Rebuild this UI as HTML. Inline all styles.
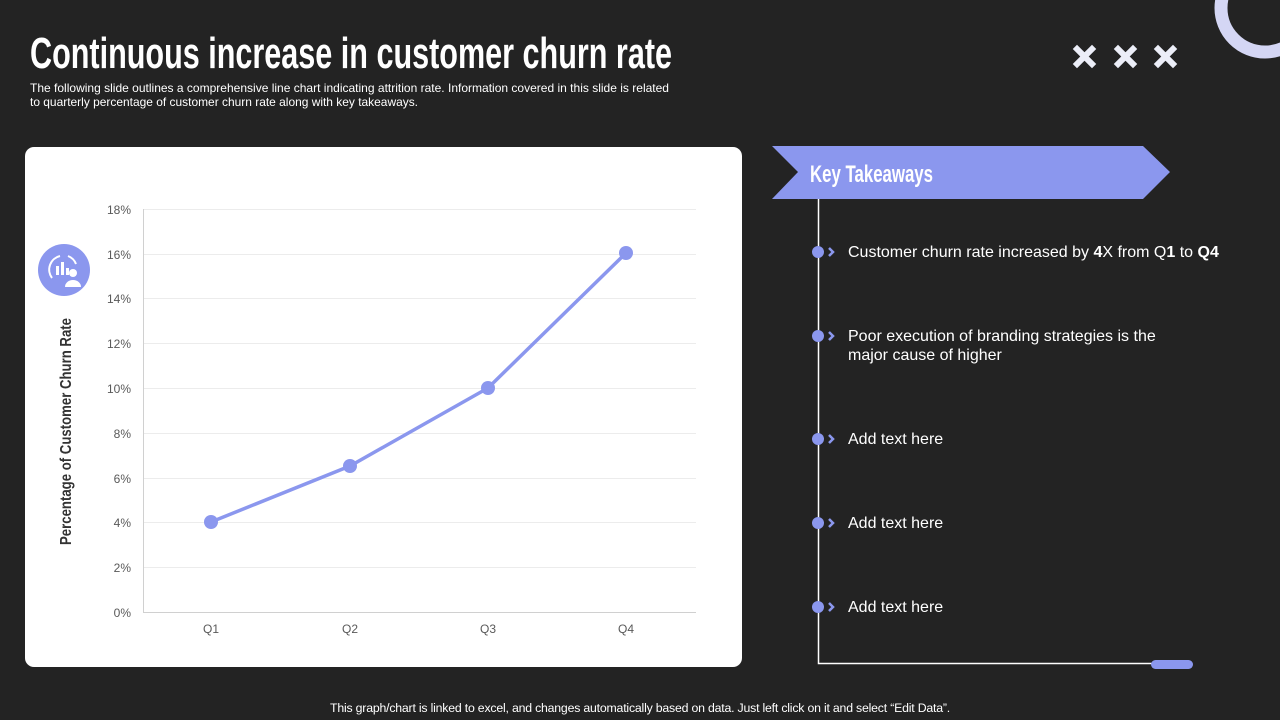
<!DOCTYPE html>
<html><head><meta charset="utf-8"><style>
body{margin:0;width:1280px;height:720px;background:#232323;position:relative;overflow:hidden;font-family:"Liberation Sans",sans-serif;color:#fff}
.a{position:absolute}
.card{left:25px;top:147px;width:717px;height:520px;background:#fff;border-radius:9px}
.it{left:848px;font-size:16px;line-height:19px;color:#fff;letter-spacing:0}
.foot{left:0;width:1280px;top:701px;text-align:center;font-size:12.3px;letter-spacing:-0.2px}
</style></head><body>
<svg class="a" style="left:0;top:0" width="1280" height="720">
<text x="30" y="68" font-family="Liberation Sans" font-weight="bold" font-size="44" fill="#fff" textLength="642" lengthAdjust="spacingAndGlyphs">Continuous increase in customer churn rate</text>
<text x="30" y="92" font-family="Liberation Sans" font-size="12" fill="#fff" textLength="639" lengthAdjust="spacingAndGlyphs">The following slide outlines a comprehensive line chart indicating attrition rate. Information covered in this slide is related</text>
<text x="30" y="106" font-family="Liberation Sans" font-size="12" fill="#fff" textLength="388" lengthAdjust="spacingAndGlyphs">to quarterly percentage of customer churn rate along with key takeaways.</text>
<circle cx="1265" cy="8" r="44" fill="none" stroke="#d4d6f4" stroke-width="13"/>
<g stroke="#eceef8" stroke-width="6" stroke-linecap="square">
<path d="M1077 49l15 15M1092 49l-15 15M1118 49l15 15M1133 49l-15 15M1158 49l15 15M1173 49l-15 15"/></g>
<polygon points="772,146 1143,146 1170,172 1143,199 772,199 798,172" fill="#8b97ee"/>
<text x="810" y="182" font-family="Liberation Sans" font-weight="bold" font-size="24" fill="#fff" textLength="123" lengthAdjust="spacingAndGlyphs">Key Takeaways</text>
<path d="M818.5 199V663.5H1155" stroke="#fff" stroke-width="1.5" fill="none"/>
<rect x="1151" y="660" width="42" height="9" rx="4.5" fill="#8b97ee"/>
<g fill="#8b97ee">
<circle cx="818" cy="252" r="6"/><circle cx="818" cy="336" r="6"/><circle cx="818" cy="439" r="6"/><circle cx="818" cy="523" r="6"/><circle cx="818" cy="607" r="6"/></g>
<g stroke="#8b97ee" stroke-width="2.5" fill="none">
<path d="M829 248l4 4-4 4M829 332l4 4-4 4M829 435l4 4-4 4M829 519l4 4-4 4M829 603l4 4-4 4"/></g>
</svg>
<div class="a it" style="top:243px">Customer churn rate increased by <b>4</b>X from Q<b>1</b> to <b>Q4</b></div>
<div class="a it" style="top:327px;width:330px">Poor execution of branding strategies is the major cause of higher</div>
<div class="a it" style="top:430px">Add text here</div>
<div class="a it" style="top:514px">Add text here</div>
<div class="a it" style="top:598px">Add text here</div>
<div class="a card"></div>
<svg class="a" style="left:0;top:0" width="760" height="700">
<g stroke="#ececec" stroke-width="1">
<path d="M143 209.5H696M143 254.5H696M143 298.5H696M143 343.5H696M143 388.5H696M143 433.5H696M143 478.5H696M143 522.5H696M143 567.5H696"/></g>
<path d="M143.5 209V612.5H696" stroke="#d0d0d0" fill="none"/>
<g font-family="Liberation Sans" font-size="12" fill="#595959" text-anchor="end">
<text x="131" y="214">18%</text><text x="131" y="259">16%</text><text x="131" y="303">14%</text><text x="131" y="348">12%</text><text x="131" y="393">10%</text><text x="131" y="438">8%</text><text x="131" y="483">6%</text><text x="131" y="527">4%</text><text x="131" y="572">2%</text><text x="131" y="617">0%</text></g>
<g font-family="Liberation Sans" font-size="12" fill="#595959" text-anchor="middle">
<text x="211" y="633">Q1</text><text x="350" y="633">Q2</text><text x="488" y="633">Q3</text><text x="626" y="633">Q4</text></g>
<polyline points="211,522 350,466 488,388 626,253" stroke="#8b97ee" stroke-width="3.5" fill="none"/>
<g fill="#8b97ee"><circle cx="211" cy="522" r="7"/><circle cx="350" cy="466" r="7"/><circle cx="488" cy="388" r="7"/><circle cx="626" cy="253" r="7"/></g>
<text transform="translate(71,545) rotate(-90)" font-family="Liberation Sans" font-weight="bold" font-size="16" fill="#333" textLength="227" lengthAdjust="spacingAndGlyphs">Percentage  of Customer  Churn  Rate</text>
<circle cx="64" cy="270" r="26" fill="#8b97ee"/>
<g stroke="#fff" stroke-width="2" fill="none"><path d="M52 278a14 14 0 0 1 8-22M68 256a14 14 0 0 1 8 8"/></g>
<g fill="#fff"><rect x="56" y="266" width="3" height="9"/><rect x="61" y="262" width="3" height="13"/><rect x="66" y="268" width="3" height="7"/>
<circle cx="73" cy="273" r="4"/><path d="M65 287a8 7 0 0 1 16 0z"/></g>
</svg>
<div class="a foot">This graph/chart is linked to excel, and changes automatically based on data. Just left click on it and select “Edit Data”.</div>
</body></html>
